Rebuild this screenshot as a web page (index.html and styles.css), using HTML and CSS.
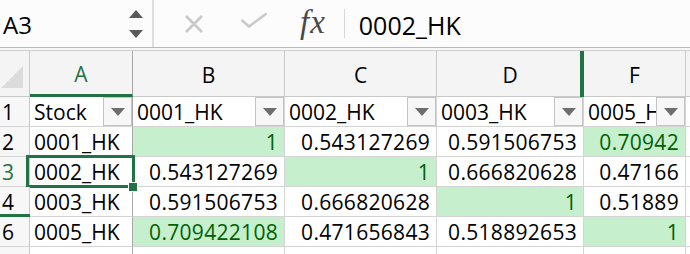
FILE: index.html
```html
<!DOCTYPE html>
<html>
<head>
<meta charset="utf-8">
<link rel="stylesheet" href="styles.css">
</head>
<body>
<div class="fbar">
  <div class="namebox">
    <span class="ref">A3</span>
    <div class="spin"><span class="up"></span><span class="down"></span></div>
  </div>
  <svg class="ic-x" width="22" height="18" viewBox="0 0 22 18"><path d="M3 1 L19 17 M19 1 L3 17" stroke="#c9c9c9" stroke-width="2.6" fill="none"/></svg>
  <svg class="ic-ok" width="28" height="16" viewBox="0 0 28 16"><path d="M1.5 8 L9 14.5 L26.5 1.5" stroke="#c9c9c9" stroke-width="2.6" fill="none"/></svg>
  <span class="fx">fx</span>
  <div class="fsep"></div>
  <div class="ftext">0002_HK</div>
</div>
<div class="fgap"></div>
<div class="sheet">
  <div class="ch corner"><span class="tri"></span></div>
  <div class="ch sel-col frz">A</div>
  <div class="ch">B</div>
  <div class="ch">C</div>
  <div class="ch">D</div>
  <div class="ch hid-col">F</div>
  <div class="ch rest"></div>

  <div class="rh">1</div>
  <div class="c flt frz"><span class="t">Stock</span><span class="dd"></span></div>
  <div class="c flt"><span class="t">0001_HK</span><span class="dd"></span></div>
  <div class="c flt"><span class="t">0002_HK</span><span class="dd"></span></div>
  <div class="c flt"><span class="t">0003_HK</span><span class="dd"></span></div>
  <div class="c flt"><span class="t">0005_H</span><span class="dd"></span></div>
  <div class="c rest"></div>

  <div class="rh">2</div>
  <div class="c frz">0001_HK</div>
  <div class="c n g">1</div>
  <div class="c n">0.543127269</div>
  <div class="c n">0.591506753</div>
  <div class="c n g">0.70942</div>
  <div class="c rest"></div>

  <div class="rh sel-row">3</div>
  <div class="c frz active">0002_HK<span class="handle"></span></div>
  <div class="c n">0.543127269</div>
  <div class="c n g">1</div>
  <div class="c n">0.666820628</div>
  <div class="c n">0.47166</div>
  <div class="c rest"></div>

  <div class="rh">4</div>
  <div class="c frz">0003_HK</div>
  <div class="c n">0.591506753</div>
  <div class="c n">0.666820628</div>
  <div class="c n g">1</div>
  <div class="c n">0.51889</div>
  <div class="c rest"></div>

  <div class="rh hid-row">6</div>
  <div class="c frz">0005_HK</div>
  <div class="c n g">0.709422108</div>
  <div class="c n">0.471656843</div>
  <div class="c n">0.518892653</div>
  <div class="c n g">1</div>
  <div class="c rest"></div>

  <div class="rh"></div>
  <div class="c frz"></div>
  <div class="c"></div>
  <div class="c"></div>
  <div class="c"></div>
  <div class="c"></div>
  <div class="c rest"></div>
</div>
</body>
</html>
```
FILE: styles.css
```css
html, body {
  margin: 0;
  padding: 0;
  background: #ffffff;
  overflow: hidden;
}
body {
  width: 690px;
  height: 254px;
  font-family: "Open Sans", "Noto Sans", sans-serif;
  font-size: 21px;
  color: #000;
}
.fbar {
  display: flex;
  align-items: center;
  height: 48px;
  box-sizing: border-box;
  border-bottom: 1px solid #b9b9b9;
  background: #fcfcfc;
}
.namebox {
  width: 154px;
  height: 100%;
  box-sizing: border-box;
  border-right: 2px solid #dedede;
  display: flex;
  align-items: center;
  padding-left: 3px;
}
.ref {
  font-size: 24px;
  line-height: 1;
  margin-top: 3px;
}
.spin {
  margin-left: auto;
  margin-right: 9px;
  display: flex;
  flex-direction: column;
  gap: 12px;
}
.up, .down {
  width: 0;
  height: 0;
  border-left: 7px solid transparent;
  border-right: 7px solid transparent;
}
.up { border-bottom: 8px solid #5a5a5a; }
.down { border-top: 8px solid #5a5a5a; }
.ic-x {
  margin-left: 29px;
}
.ic-ok {
  margin-left: 35px;
  margin-top: -8px;
}
.fx {
  margin-left: 32px;
  font-family: "Liberation Serif", serif;
  font-style: italic;
  font-size: 33px;
  color: #4a4a4a;
  line-height: 1;
  margin-top: -3px;
  letter-spacing: 1px;
}
.fsep {
  width: 1px;
  height: 29px;
  background: #d8d8d8;
  margin-left: 18px;
}
.ftext {
  margin-left: 14px;
  font-size: 25px;
  margin-top: 3px;
}
.fgap {
  height: 2px;
  background: #f6f6f6;
  border-bottom: 1px solid #cfcfcf;
}
.sheet {
  display: grid;
  grid-template-columns: 30px 103px 152px 152px 147px 102px 1fr;
  grid-template-rows: 46px repeat(5, 30px) 8px;
}
.ch, .rh, .c {
  box-sizing: border-box;
  border-right: 1px solid #d4d4d4;
  border-bottom: 1px solid #d4d4d4;
  position: relative;
  white-space: nowrap;
  overflow: visible;
}
.ch {
  background: #f4f4f4;
  border-right-color: #c9c9c9;
  border-bottom-color: #c9c9c9;
  display: flex;
  align-items: center;
  justify-content: center;
  padding-top: 2px;
}
.corner { overflow: hidden; }
.tri {
  position: absolute;
  right: 6px;
  bottom: 8px;
  width: 0;
  height: 0;
  border-left: 22px solid transparent;
  border-bottom: 22px solid #dcdcdc;
}
.sel-col {
  color: #217346;
  border-bottom: 3px solid #217346;
}
.hid-col::before {
  content: "";
  position: absolute;
  left: -4px;
  top: 0;
  bottom: -1px;
  width: 4px;
  background: #217346;
}
.rest { border-right: none; }
.rh {
  background: #f7f7f7;
  display: flex;
  align-items: center;
  padding-left: 2px;
  padding-top: 1px;
  border-right-color: #c9c9c9;
}
.sel-row { color: #217346; }
.hid-row::before {
  content: "";
  position: absolute;
  left: 0;
  right: -1px;
  top: -3px;
  height: 3px;
  background: #217346;
}
.c {
  display: flex;
  align-items: center;
  padding: 1px 4px 0;
}
.frz { border-right: 1px solid #a9a9a9; }
.c.n {
  justify-content: flex-end;
  padding-right: 6px;
  letter-spacing: 0.3px;
}
.c.g {
  background: #c6efce;
  color: #006100;
}
.flt {
  padding-right: 0;
  padding-top: 0;
  overflow: hidden;
}
.flt .t {
  flex: 1;
  overflow: hidden;
  padding-top: 1px;
}
.dd {
  flex: none;
  width: 29px;
  height: 29px;
  box-sizing: border-box;
  border: 1px solid #c3c3c3;
  background: #f7f7f7;
  display: flex;
  align-items: center;
  justify-content: center;
}
.dd::after {
  content: "";
  width: 0;
  height: 0;
  border-left: 7px solid transparent;
  border-right: 7px solid transparent;
  border-top: 8px solid #6e6e6e;
}
.active::after {
  content: "";
  position: absolute;
  left: -4px;
  top: -2px;
  right: -3px;
  bottom: -2px;
  border: 3px solid #217346;
  pointer-events: none;
}
.handle {
  position: absolute;
  right: -6px;
  bottom: -6px;
  width: 8px;
  height: 8px;
  background: #217346;
  border: 1px solid #fff;
  z-index: 2;
}
```
